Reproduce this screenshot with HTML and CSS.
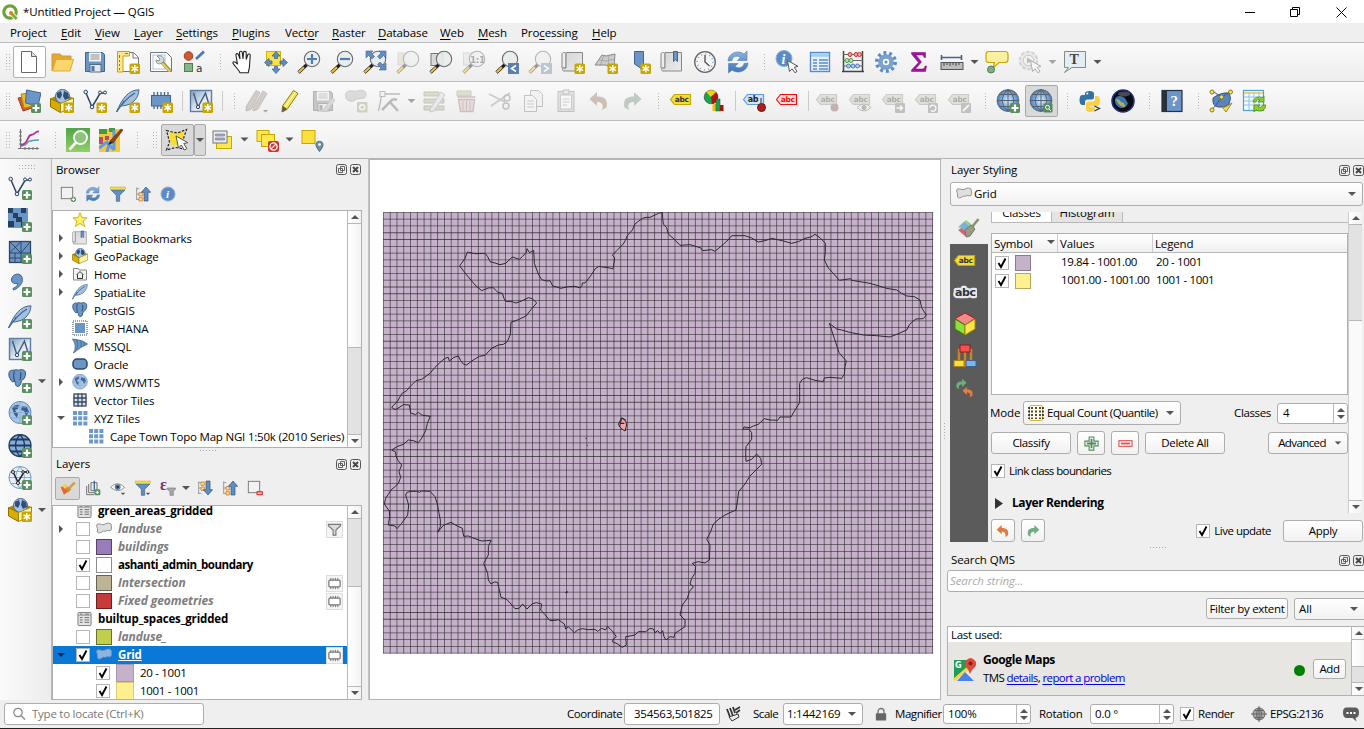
FILE: index.html
```html
<!DOCTYPE html>
<html lang="en">
<head>
<meta charset="utf-8">
<title>*Untitled Project — QGIS</title>
<link rel="stylesheet" href="styles.css">
</head>
<body>
<svg class="defs" width="0" height="0">
<defs>
<linearGradient id="gBlue" x1="0" y1="0" x2="0" y2="1"><stop offset="0" stop-color="#8fb3dc"/><stop offset="1" stop-color="#3f74b5"/></linearGradient>
<linearGradient id="gGrey" x1="0" y1="0" x2="1" y2="1"><stop offset="0" stop-color="#d4d4d4"/><stop offset="1" stop-color="#ececec"/></linearGradient>
<linearGradient id="gPale" x1="0" y1="0" x2="1" y2="1"><stop offset="0" stop-color="#7f9fc4"/><stop offset=".6" stop-color="#e9eff6"/><stop offset="1" stop-color="#a9bfd8"/></linearGradient>
<linearGradient id="gGreen" x1="0" y1="0" x2="0" y2="1"><stop offset="0" stop-color="#4fa544"/><stop offset="1" stop-color="#93cf6d"/></linearGradient>
<radialGradient id="gGlobe"><stop offset="0" stop-color="#e2f0ff"/><stop offset=".6" stop-color="#7db1e6"/><stop offset="1" stop-color="#4d76a8"/></radialGradient>

<symbol id="b-star" viewBox="0 0 24 24"><rect x="13.500" y="13.500" width="10.500" height="10.500" rx="1.500" fill="#c9a500"/><path d="M18.800 15v7.600M15.500 16.900l6.600 3.800M22.100 16.900l-6.600 3.800" stroke="#fff" stroke-width="1.500"/></symbol>
<symbol id="b-plus" viewBox="0 0 24 24"><rect x="14" y="14" width="10" height="10" rx="1.500" fill="#5a9060"/><path d="M19 15.500v7M15.500 19h7" stroke="#fff" stroke-width="2.200"/></symbol>
<symbol id="mag" viewBox="0 0 24 24"><path d="M10 14.500L1.500 22.500" stroke="#222" stroke-width="3.200"/><path d="M7 17.300L1.700 22.300" stroke="#f6c330" stroke-width="2"/><circle cx="15" cy="9" r="7.700" fill="#e9eced" fill-opacity=".9" stroke="#6a6a6a" stroke-width="1.100"/></symbol>
<symbol id="tag" viewBox="0 0 24 24"><path d="M1.500 10.500L5.500 5.500h16v10H5.500z" stroke-width="1.200"/></symbol>

<symbol id="qgis" viewBox="0 0 16 16"><circle cx="8" cy="8" r="6.200" fill="none" stroke="#6da33a" stroke-width="3.200"/><path d="M9 9l6 6.200" stroke="#fff" stroke-width="4.500"/><path d="M9.500 9.500l5.200 5.500" stroke="#7fb03f" stroke-width="3"/><circle cx="9" cy="9" r="2" fill="#ee7913"/></symbol>
<symbol id="new" viewBox="0 0 24 24"><path d="M4.500 1.500h10l5 5v16h-15z" fill="#fff" stroke="#666"/><path d="M14.500 1.500v5h5" fill="#ddd" stroke="#666"/></symbol>
<symbol id="open" viewBox="0 0 24 24"><path d="M2 21V4h8l2 2h9v3" fill="#e2a832" stroke="#d2982d"/><path d="M2.500 21L6 9.500h17.500L20 21z" fill="#fbd66c" stroke="#e0a93a"/></symbol>
<symbol id="save" viewBox="0 0 24 24"><path d="M2.500 2.500h17l2 2v17h-19z" fill="#6b95c7" stroke="#41648f"/><rect x="6" y="2.500" width="12" height="9" fill="#f3f3f3"/><path d="M7.500 5h9M7.500 7h9M7.500 9h9" stroke="#777" stroke-width=".8"/><rect x="7" y="14.500" width="11" height="7.500" fill="#e8e8e8" stroke="#506c8f"/><rect x="8.500" y="16" width="3" height="5" fill="#4d75a5"/></symbol>
<symbol id="layout" viewBox="0 0 24 24"><path d="M2.500 2.500h15l5 5v14h-20z" fill="#fff" stroke="#777"/><path d="M17 3v5h5" fill="none" stroke="#777"/><path d="M1.500 1.500h12v4.500h-6.500v16H1.500z" fill="#fde68e" stroke="#c8a013"/><path d="M3.500 5v3M3.500 10v2M3.500 14v2M3.500 18v2M9 3.500h3" stroke="#a07e00"/><use href="#b-star"/></symbol>
<symbol id="report" viewBox="0 0 24 24"><path d="M1.500 2.500h16l5 5v14h-21z" fill="#fff" stroke="#777"/><rect x="4" y="5" width="12" height="14" fill="none" stroke="#a9c3ea"/><path d="M11 10l10 11" stroke="#a78b2a" stroke-width="3.600"/><path d="M12 12l9 9.500" stroke="#e5ca72" stroke-width="2"/><path d="M8 6l3 3-1 2-3-1c0 3 2 5 6 3l2-2c0-4-2-6-7-5z" fill="#d9dcdd" stroke="#777" stroke-width=".8"/></symbol>
<symbol id="stylem" viewBox="0 0 24 24"><circle cx="6.500" cy="6" r="4.300" fill="#cf5a32" stroke="#9c3d1d"/><path d="M14 9l8-7.500" stroke="#4d79b0" stroke-width="2.800"/><rect x="2.500" y="13.500" width="8" height="8" fill="#88b48b" stroke="#4f7d55"/><text x="14" y="21.500" class="svg-t" font-size="10.500" fill="#333">a</text></symbol>
<symbol id="pan" viewBox="0 0 24 24"><path d="M9 22.800c-1-3-5-6-7-9.500-.5-2 2-2.500 4.500 1L5 5.500c-.5-2.200 2-2.600 2.600-.5L9 9 8.500 2.700c0-2 2.600-2 2.800 0L12 9l.5-6.300c.2-1.800 2.700-1.700 2.700.2V9.500L16.700 5c.6-1.700 2.700-1.200 2.500.5L18.500 16c0 3-1 4-1.200 6.800z" fill="#fff" stroke="#222" stroke-width="1.100"/></symbol>
<symbol id="panto" viewBox="0 0 24 24"><rect x="2.500" y="1.500" width="14" height="14" fill="#f9e241" stroke="#d2b100"/><path d="M12 1.500L16 6h-2.500v2.500h-3V6H8zM12 23.500L16 19h-2.500v-2.500h-3V19H8zM.5 12.500L5 8.500V11h3v3H5v2.500zM23.500 12.500L19 8.500V11h-3v3h3v2.500z" fill="#5f8dc4" stroke="#3f6594" stroke-width=".8"/></symbol>
<symbol id="zin" viewBox="0 0 24 24"><use href="#mag"/><path d="M15 4v10M10 9h10" stroke="#4f7fb8" stroke-width="2.200"/></symbol>
<symbol id="zout" viewBox="0 0 24 24"><use href="#mag"/><path d="M10 9h10" stroke="#4f7fb8" stroke-width="2.200"/></symbol>
<symbol id="zfull" viewBox="0 0 24 24"><use href="#mag"/><path d="M3 1h7L8 3l3.500 3.500-2.500 2.500L5.500 5.500 3 8zM23 1v7l-2.500-2.500L17 9l-2.500-2.500L18 3l-2-2zM23 20h-7l2-2-3.500-3.500L17 12l3.500 3.500L23 13z" fill="#5f8dc4" stroke="#3f6594" stroke-width=".6"/></symbol>
<symbol id="zsel" viewBox="0 0 24 24"><rect x="2" y="3" width="12" height="12" fill="#d9d6b8" stroke="#bbb"/><use href="#mag"/></symbol>
<symbol id="zlay" viewBox="0 0 24 24"><rect x="2" y="3.500" width="12" height="12" fill="#d8d8d8" stroke="#777"/><use href="#mag"/></symbol>
<symbol id="z11" viewBox="0 0 24 24"><rect x="1.500" y="3" width="12" height="12" fill="#e0e0e0" stroke="#bbb"/><use href="#mag"/><text x="8" y="12.500" class="svg-t svg-b" font-size="9" fill="#555">1:1</text></symbol>
<symbol id="zlast" viewBox="0 0 24 24"><use href="#mag"/><rect x="13" y="13" width="11" height="11" fill="#587fae"/><path d="M21 15.500l-4.500 3 4.500 3" fill="none" stroke="#fff" stroke-width="1.600"/></symbol>
<symbol id="znext" viewBox="0 0 24 24"><use href="#mag"/><rect x="13" y="13" width="11" height="11" fill="#7c93ae"/><path d="M16 15.500l4.500 3-4.500 3" fill="none" stroke="#fff" stroke-width="1.600"/></symbol>
<symbol id="roll" viewBox="0 0 24 24"><path d="M1 4c0-2 4-2 4 0v14H1z" fill="#eee" stroke="#888"/><path d="M5 2.500h16.500v18.500H3c-2 0-2-3 0-3h2z" fill="url(#gGrey)" stroke="#888"/></symbol>
<symbol id="newmap" viewBox="0 0 24 24"><use href="#roll"/><use href="#b-star"/></symbol>
<symbol id="new3d" viewBox="0 0 24 24"><path d="M1 15L8 5l4 1 9-2-1 13-9-2z" fill="#ccc" stroke="#888"/><path d="M5 10l7 1 9-2M10 5l-4 11M15 5l-1 12" stroke="#999" fill="none" stroke-width=".7"/><use href="#b-star"/></symbol>
<symbol id="newbm" viewBox="0 0 24 24"><path d="M7.500 1.500h9v19L12 17l-4.500-3z" fill="#6b95c7" stroke="#3f6594"/><use href="#b-star"/></symbol>
<symbol id="bms" viewBox="0 0 24 24"><use href="#roll"/><path d="M13.500 1.500h4v10l-2-1.800-2 1.800z" fill="#6b95c7" stroke="#3f6594"/></symbol>
<symbol id="clock" viewBox="0 0 24 24"><circle cx="12" cy="12" r="10.300" fill="#f4f4f4" stroke="#666" stroke-width="1.300"/><circle cx="12" cy="12" r="7.800" fill="none" stroke="#78a0cf" stroke-width="1.500" stroke-dasharray="1 3.080"/><path d="M12 5v7l4.500 4" fill="none" stroke="#555" stroke-width="1.400"/></symbol>
<symbol id="refresh" viewBox="0 0 24 24"><path d="M2 11C2 4 11-1 18 4l3-3v9.500h-9.500l3-3C10 4.500 6 7 6 10.500zM22 13c0 7-9 12-16 7l-3.500 3V13.500h9.500l-3 3c4.500 3 8.500.5 9-3z" fill="url(#gBlue)" stroke="#4a7db9" stroke-width=".6"/></symbol>
<symbol id="cursor" viewBox="0 0 24 24"><path d="M12.500 10.500l2 11 2.500-2.700 3 4 2-1.500-2.800-4 3.800-1z" fill="#fff" stroke="#555"/></symbol>
<symbol id="info" viewBox="0 0 24 24"><circle cx="12" cy="12" r="10.500" fill="#5c8ac2" stroke="#8caed6" stroke-width="1.500"/><text x="9" y="18" class="svg-s" font-size="17" fill="#fff">i</text></symbol>
<symbol id="ident" viewBox="0 0 24 24"><circle cx="9" cy="8.500" r="8" fill="#5c8ac2" stroke="#8caed6"/><text x="6.500" y="13.500" class="svg-s" font-size="14" fill="#fff">i</text><use href="#cursor"/></symbol>
<symbol id="table" viewBox="0 0 24 24"><rect x="2.500" y="2.500" width="19" height="19" fill="#e6f0fb" stroke="#5c8ac2" stroke-width="1.400"/><path d="M3 5h18" stroke="#9fd0ef" stroke-width="3.500"/><path d="M5 10h4M11 10h9M5 13h4M11 13h9M5 16h4M11 16h9M5 19h4M11 19h9" stroke="#5c8ac2" stroke-width="1.300"/></symbol>
<symbol id="abacus" viewBox="0 0 24 24"><path d="M2.500 1v20M21.500 1v20M1 21.500h22" stroke="#444" stroke-width="1.500"/><path d="M2 4.500h20M2 10.500h20M2 16h20" stroke="#666"/><g stroke-width="1"><g fill="#f3a0a0" stroke="#b33"><circle cx="9" cy="4.500" r="2"/><circle cx="15" cy="4.500" r="2"/><circle cx="18.500" cy="4.500" r="2"/></g><g fill="#b9e8b0" stroke="#4a9a44"><circle cx="6" cy="10.500" r="2"/><circle cx="10" cy="10.500" r="2"/></g><g fill="#a8cdee" stroke="#4a7db9"><circle cx="7.500" cy="16" r="2"/><circle cx="12" cy="16" r="2"/><circle cx="16.500" cy="16" r="2"/></g></g></symbol>
<symbol id="gear" viewBox="0 0 24 24"><circle cx="12" cy="12" r="9" fill="none" stroke="#5c8ac2" stroke-width="4" stroke-dasharray="2.830 2.830"/><circle cx="12" cy="12" r="5.500" fill="#fff" stroke="#79a1d3" stroke-width="4.500"/><circle cx="12" cy="12" r="1.500" fill="#5c8ac2"/></symbol>
<symbol id="sigma" viewBox="0 0 24 24"><path d="M4.500 2.500h14v5h-1.500c-.3-2-1-2.500-3-2.500H9l5.500 7L8.500 19H15c2 0 2.500-.8 3-3h1.500l-1 5.500H4.500v-1.500l7-7.500-7-8.500z" fill="#a5119f" stroke="#7c0b78" stroke-width=".5"/></symbol>
<symbol id="measure" viewBox="0 0 24 24"><path d="M1.500 7.500h20M1.500 5v5M21.500 5v5" stroke="#41648f" stroke-width="1.600"/><rect x="1" y="12.500" width="22" height="7" fill="#bdbdbd" stroke="#555"/><path d="M4 13v3M7 13v2M10 13v3M13 13v2M16 13v3M19 13v2" stroke="#444"/></symbol>
<symbol id="tips" viewBox="0 0 24 24"><path d="M4 1.500h16q3 0 3 3v5q0 3-3 3h-6L8 18l1.500-5.500H4q-3 0-3-3v-5q0-3 3-3z" fill="#fbf0a0" stroke="#c9a500" stroke-width="1.200"/><circle cx="6" cy="19.500" r="3.500" fill="#7fae83" stroke="#4f7d55"/></symbol>
<symbol id="action" viewBox="0 0 24 24"><circle cx="10.500" cy="10.500" r="8.800" fill="#ddd" stroke="#aaa" stroke-width="2" stroke-dasharray="4 1.500"/><circle cx="10.500" cy="10.500" r="5.300" fill="#eee" stroke="#888"/><path d="M9 7.500l5 3-5 3z" fill="#777"/><use href="#cursor"/></symbol>
<symbol id="textann" viewBox="0 0 24 24"><path d="M1.500 1.500h21v16H9L1.500 22.500l4-5h-4z" fill="#e4edf1" stroke="#888"/><text x="6.500" y="14" class="svg-serif" font-size="14" fill="#444">T</text></symbol>

<symbol id="ds" viewBox="0 0 24 24"><path d="M1 9l10-2 4 12-9 3z" fill="#cf5a32" stroke="#a0401c"/><path d="M4 5l10-1 3 13-10 2z" fill="#e9b92f" stroke="#b08a10"/><path d="M9.500 1l14.500 3-3 13-12.500-3z" fill="#6b95c7" stroke="#41648f"/><use href="#b-plus"/></symbol>
<symbol id="boxg" viewBox="0 0 24 24"><path d="M.5 9.500L12 4l11.500 5-13 6z" fill="#b18d00"/><circle cx="12.500" cy="7.500" r="7" fill="#a9c3e2" stroke="#41648f"/><path d="M7 4l4-2 1 4-2 4-3-2zM14 2l4 2 1 5-4 2-2-4z" fill="#2f4f78"/><path d="M.5 9.500L10.500 14.500v9L.5 18z" fill="#d8ac00" stroke="#8b6f00"/><path d="M10.500 14.500l13-5.500v9l-13 5.500z" fill="#fbf4a6" stroke="#a38700"/></symbol>
<symbol id="newgpkg" viewBox="0 0 24 24"><use href="#boxg"/><use href="#b-star"/></symbol>
<symbol id="vv" viewBox="0 0 24 24"><path d="M3 4l6 14 8-13.500 5-.8" fill="none" stroke="#2f4866" stroke-width="1.500"/><g fill="#e6ebf0" stroke="#2f4866"><circle cx="2.700" cy="3" r="1.800"/><circle cx="9" cy="18" r="1.800"/><circle cx="17" cy="3.500" r="1.500"/><circle cx="22" cy="3.500" r="1.500"/></g></symbol>
<symbol id="newshp" viewBox="0 0 24 24"><use href="#vv"/><use href="#b-star"/></symbol>
<symbol id="feather" viewBox="0 0 24 24"><path d="M.5 23C6 10 12 1 23 .8c-.5 4-1 8-7 13-4 2.500-8 3-11 3.200" fill="#a3c0e0" stroke="#41648f"/><path d="M.5 23C7 13 12 8 19 4M8 12l-2 4" stroke="#41648f" fill="none" stroke-width="1.300"/></symbol>
<symbol id="newspl" viewBox="0 0 24 24"><use href="#feather"/><use href="#b-star"/></symbol>
<symbol id="chip" viewBox="0 0 24 24"><path d="M5 3v5M8.500 3v5M12 3v5M15.500 3v5M19 3v5M5 16v4M8.500 16v4M12 16v4" stroke="#41648f" stroke-width="1.300"/><rect x="2.500" y="6.500" width="19" height="10.500" fill="#6b95c7" stroke="#41648f"/></symbol>
<symbol id="newmem" viewBox="0 0 24 24"><use href="#chip"/><use href="#b-star"/></symbol>
<symbol id="virt" viewBox="0 0 24 24"><rect x="1.500" y="1.500" width="21" height="21" fill="url(#gPale)" stroke="#5f7da3" stroke-width="1.400"/><path d="M4.500 4l4.500 14L16.500 4l3 10" fill="none" stroke="#41597a" stroke-width="1.400"/><circle cx="9" cy="18" r="1.700" fill="#e6ebf0" stroke="#2f4866"/></symbol>
<symbol id="newvirt" viewBox="0 0 24 24"><use href="#virt"/><use href="#b-star"/></symbol>
<symbol id="pencil" viewBox="0 0 24 24"><path d="M4.500 17L15.500 1.500l4.500 3L9 20.500 4 23z" fill="#f4e556" stroke="#8b7a1a"/><path d="M5 17l4 3-5 3z" fill="#555"/><path d="M7 18L17.500 3" stroke="#fffbd0"/></symbol>
<symbol id="pencils" viewBox="0 0 24 24"><path d="M1.500 17L11 1.500l4 2L6 20.500 1 22zM8.500 18L18 2l4 2.500-9.500 16L8 22z" fill="#a89c98" stroke="#8b7f7b"/><path d="M18 21h5l-2.500 2.500z" fill="#444"/></symbol>
<symbol id="saveed" viewBox="0 0 24 24"><use href="#save"/><path d="M13 20L21 9l3 2-8 11-3 1z" fill="#bbb" stroke="#999"/></symbol>
<symbol id="addpoly" viewBox="0 0 24 24"><path d="M2 4c3-4 7-1 11-2 5-2 10 0 9 4-1 5-5 3-9 4-3 1-3 3-7 2C1 11 1 7 2 4z" fill="#bbb" stroke="#999"/><rect x="13" y="13" width="10.500" height="10.500" rx="1" fill="#aaa68e"/><circle cx="18.200" cy="18.200" r="2.500" fill="none" stroke="#fff" stroke-width="1.500"/></symbol>
<symbol id="vertex" viewBox="0 0 24 24"><path d="M1.500 22L5 5h18" fill="none" stroke="#777" stroke-width="1.300"/><rect x="3" y="2.500" width="5" height="5" fill="#eee" stroke="#777"/><path d="M12 12l9 10M20 11q-4-2-6 1L5 21" fill="none" stroke="#777" stroke-width="2.500"/></symbol>
<symbol id="modify" viewBox="0 0 24 24"><path d="M2 3h15v4H2zM2 10h20v4H2zM2 17h20v4H2z" fill="#bdbba4" stroke="#8f8d78"/><path d="M8 20L19 3l4 3-11 16-4 1z" fill="#ddd" stroke="#999"/></symbol>
<symbol id="trash" viewBox="0 0 24 24"><path d="M2 2h14v5H2z" fill="#c2bfa5" stroke="#999"/><path d="M3.500 10.500h16l-1.500 12H5.500zM2.500 8h18" fill="#d8c5c5" stroke="#a37f7f" stroke-width="1.400"/><path d="M8 12v9M11.500 12v9M15 12v9" stroke="#a37f7f"/></symbol>
<symbol id="cut" viewBox="0 0 24 24"><path d="M1 5l16 8M3 17L22 4" stroke="#999" stroke-width="1.800"/><circle cx="19" cy="9" r="3" fill="none" stroke="#888" stroke-width="1.500"/><circle cx="18" cy="17" r="3" fill="none" stroke="#888" stroke-width="1.500"/></symbol>
<symbol id="copy" viewBox="0 0 24 24"><path d="M9.500 1.500h8l4 4v12h-12z" fill="#eee" stroke="#888"/><path d="M3.500 6.500h8l4 4v12h-12z" fill="#f7f7f7" stroke="#888"/><path d="M6 12h7M6 15h7M6 18h7" stroke="#999"/></symbol>
<symbol id="paste" viewBox="0 0 24 24"><rect x="4" y="2.500" width="16" height="20" fill="#ccc" stroke="#888"/><rect x="6.500" y="6" width="11" height="14" fill="#fff" stroke="#999"/><path d="M9 1h6v4H9z" fill="#ddd" stroke="#888"/><path d="M8.500 10h7M8.500 13h7M8.500 16h5" stroke="#999"/></symbol>
<symbol id="undo" viewBox="0 0 24 24"><path d="M2.500 10L10 3v4.500c8 0 11 3 9.500 11l-4.500 2.500c2-5 0-8-5-8V17z"/></symbol>
<symbol id="redo" viewBox="0 0 24 24"><path d="M21.500 10L14 3v4.500C6 7.500 3 10.500 4.500 18.500L9 21c-2-5 0-8 5-8V17z"/></symbol>
<symbol id="lab" viewBox="0 0 24 24"><use href="#tag" fill="#f2dc3c" stroke="#c9a500"/><text x="5.800" y="13" class="svg-t svg-b" font-size="7.500" fill="#333">abc</text></symbol>
<symbol id="diag" viewBox="0 0 24 24"><circle cx="9" cy="8" r="6.800" fill="#14a651" stroke="#333" stroke-width=".6"/><path d="M9 8L4.200 3A7 7 0 0 1 14 3.300z" fill="#f2d10c"/><path d="M9 8l5-4.800A7 7 0 0 1 10 15z" fill="#b01515"/><rect x="10.500" y="15" width="3.500" height="7" fill="#f7b90b"/><rect x="14" y="10" width="4" height="12" fill="#14a651" stroke="#333" stroke-width=".5"/><rect x="18" y="16" width="3.500" height="6" fill="#a11"/></symbol>
<symbol id="labpin" viewBox="0 0 24 24"><use href="#tag" fill="#cfe5fb" stroke="#5c9ae0"/><text x="5.800" y="13" class="svg-t svg-b" font-size="8" fill="#222">ab</text><path d="M19 9v7" stroke="#888" stroke-width="2"/><circle cx="19.500" cy="18.500" r="4" fill="#a52222" stroke="#7c1010"/></symbol>
<symbol id="labred" viewBox="0 0 24 24"><use href="#tag" fill="#fbdada" stroke="#ee1111"/><text x="5.800" y="13" class="svg-t svg-b" font-size="7.500" fill="#e11">abc</text></symbol>
<symbol id="labg" viewBox="0 0 24 24"><use href="#tag" fill="#c9c8bc" stroke="#9a998c"/><text x="5.800" y="13" class="svg-t svg-b" font-size="7.500" fill="#555">abc</text></symbol>
<symbol id="lg1" viewBox="0 0 24 24"><use href="#labg"/><circle cx="19.500" cy="18.500" r="4" fill="#8c6565"/></symbol>
<symbol id="lg2" viewBox="0 0 24 24"><use href="#labg"/><path d="M9 18.500q7-7 14 0-7 7-14 0z" fill="#eee" stroke="#777"/><circle cx="16" cy="18.500" r="2.500" fill="#777"/></symbol>
<symbol id="lg3" viewBox="0 0 24 24"><use href="#labg"/><rect x="14" y="14" width="10" height="10" rx="1" fill="#888"/><path d="M15.500 19h6M19 16.500l2.500 2.500-2.500 2.500" fill="none" stroke="#fff" stroke-width="1.500"/></symbol>
<symbol id="lg4" viewBox="0 0 24 24"><use href="#labg"/><rect x="14" y="14" width="10" height="10" rx="1" fill="#888"/><path d="M17 21.500a3 3 0 1 0-1-3" fill="none" stroke="#fff" stroke-width="1.500"/></symbol>
<symbol id="lg5" viewBox="0 0 24 24"><use href="#labg"/><rect x="14" y="14" width="10" height="10" rx="1" fill="#888"/><path d="M16 22l6-6" stroke="#fff" stroke-width="1.800"/></symbol>
<symbol id="globe" viewBox="0 0 24 24"><circle cx="12" cy="11.500" r="11" fill="url(#gGlobe)" stroke="#456" stroke-width=".6"/><path d="M1 11.500h22M3 5.500h18M3 17.500h18M12 .5v22M12 .5q-12 11 0 22M12 .5q12 11 0 22" fill="none" stroke="#59626c" stroke-width="1"/></symbol>
<symbol id="globep" viewBox="0 0 24 24"><use href="#globe"/><use href="#b-plus"/></symbol>
<symbol id="globes" viewBox="0 0 24 24"><use href="#globe"/><rect x="14.500" y="14.500" width="9" height="9" rx="1" fill="#4f8a58"/><circle cx="18.500" cy="18.300" r="2" fill="none" stroke="#fff"/><path d="M20 20l2 2" stroke="#fff"/></symbol>
<symbol id="python" viewBox="0 0 24 24"><path d="M7 7h6V6H4.500Q1.500 6 1.500 11q0 5 3 5H7v-3q0-2.500 2.500-2.500H14q2 0 2-2V4.500Q16 2 11.500 2T7 4.500z" fill="#3571a3"/><path d="M17 7h2q3 0 3 5t-3 5h-7v1h5v2q0 3-4.500 3T8 20v-5q0-2.500 2.500-2.500H15q2 0 2-2.500z" fill="#fbd140"/><circle cx="9.300" cy="4.500" r="1" fill="#fff"/><path d="M16.500 17l5 2.500-5 2.500" fill="none" stroke="#333" stroke-width="1.200"/></symbol>
<symbol id="earth" viewBox="0 0 24 24"><circle cx="12" cy="12" r="11" fill="#0b0b14" stroke="#1f2f77" stroke-width="1.500"/><path d="M4 10c1-3 5-4 8-2 3 1 3 4 5 6-1 4-4 5-7 5-4-1-7-5-6-9z" fill="#3b77ad"/><path d="M5 10c2 0 4 1 5 3 3 0 4 3 4 5-3 0-7-2-9-8z" fill="#b8ac62"/><ellipse cx="13" cy="5" rx="6" ry="2.500" fill="#777" opacity=".6"/></symbol>
<symbol id="book" viewBox="0 0 24 24"><rect x="2" y="1.500" width="20" height="21" fill="#6b95c7" stroke="#222f44" stroke-width="1.200"/><rect x="2" y="1.500" width="5" height="21" fill="#27303c"/><text x="10.500" y="17" class="svg-serif" font-size="15" fill="#fff">?</text></symbol>
<symbol id="topo" viewBox="0 0 24 24"><path d="M4 9q8-6 16-5 3 5 0 11-5 4-11 3-6-1-5-9z" fill="#5c86bb" stroke="#3a5a85"/><path d="M3 2l10 6 8-5M3 21L13 8" fill="none" stroke="#3a5a85"/><g fill="#f9e555" stroke="#8b7a1a"><circle cx="3" cy="3" r="2"/><circle cx="21.500" cy="3" r="2"/><circle cx="12.500" cy="8" r="2"/><circle cx="3" cy="21" r="2"/></g><path d="M13 18l4 5 6-9-6 4z" fill="#fbe34e" stroke="#8b6a1a" stroke-width=".8"/></symbol>
<symbol id="tabref" viewBox="0 0 24 24"><rect x="1.500" y="1.500" width="20" height="20" fill="#f4faff" stroke="#4ca0d4" stroke-width="1.200"/><path d="M2 8h19M2 12h19M2 16h19M7 3v18M12 3v18M17 3v18" stroke="#8cc6e6"/><path d="M2 4h19" stroke="#e8c257" stroke-width="1.500"/><path d="M11 13c1-5 6-6 9-4l2-2v6h-6l2-2c-2-1-4 0-4 2zM24 16c-1 6-6 7-10 5l-2 2v-7h6l-2 2c2 1 4 0 5-2z" fill="#8ed024" stroke="#4f8a10" stroke-width=".8"/></symbol>

<symbol id="plot" viewBox="0 0 24 24"><path d="M3.500 1v20M1 20.500h21M2 4h3M2 8h3M2 12h3M2 16h3M8 19v3M12 19v3M16 19v3M20 19v3" stroke="#777" stroke-width="1.100"/><path d="M4 18c8-1 5-4 9-5s4-1 9-1" fill="none" stroke="#4aa5ae" stroke-width="1.400"/><path d="M4 17c8-1 6-10 10-10s4-4 8-3.500" fill="none" stroke="#b62a9b" stroke-width="1.800"/></symbol>
<symbol id="qms" viewBox="0 0 24 24"><rect width="24" height="24" fill="url(#gGreen)"/><circle cx="14.500" cy="9.500" r="6.500" fill="#8cc47c" stroke="#fff" stroke-width="1.800"/><path d="M10 14.500L3.500 21.500" stroke="#fff" stroke-width="2.600"/></symbol>
<symbol id="osm" viewBox="0 0 24 24"><rect width="21" height="23" y="1" fill="#f5c73c"/><path d="M0 1h8v5H0zM10 0h6v4h-6z" fill="#3c9d3e"/><path d="M15 2v20M0 20l8-6 7 8M8 24l2-8" stroke="#5c9be6" stroke-width="3" fill="none"/><path d="M0 9h4v7H0zM6 8h4v4H6z" fill="#b94b6a"/><path d="M11 13L22 1l2 1-10 13z" fill="#8a4715" stroke="#5a2a08" stroke-width=".6"/><path d="M9 17l2-4 3 2z" fill="#222"/></symbol>
<symbol id="select" viewBox="0 0 24 24"><path d="M5 4l7 1 6-2v14H6l-1-6z" fill="#f7dd2e"/><path d="M1.500 2.500l6 1.500 5 1 9-3.500-3 9-2 4 5 7-11-2-9 2.500 3-8z" fill="none" stroke="#222" stroke-width="1.200" stroke-dasharray="2.500 1.500"/><path d="M11 8l2.500 12 2.800-3 3 5 2.500-1.500-3-5 4-.8z" fill="#fff" stroke="#555"/></symbol>
<symbol id="selform" viewBox="0 0 24 24"><rect x="6.500" y="8.500" width="15" height="12" fill="#fbe94e" stroke="#c9a500"/><rect x="3" y="3" width="14" height="12" fill="#e6eef3" stroke="#777"/><path d="M5.500 6h9v2h-9zM5.500 10h9v2h-9z" fill="#aac" stroke="#777" stroke-width=".6"/></symbol>
<symbol id="desel" viewBox="0 0 24 24"><rect x="2" y="2.500" width="12" height="11" fill="#fbe94e" stroke="#c9a500"/><rect x="6.500" y="6.500" width="13" height="12" fill="#fbe94e" stroke="#c9a500"/><rect x="13" y="13" width="11" height="11" rx="2" fill="#d7302d"/><circle cx="18.500" cy="18.500" r="3.600" fill="none" stroke="#fff" stroke-width="1.300"/><path d="M16 21l5-5" stroke="#fff" stroke-width="1.300"/></symbol>
<symbol id="selloc" viewBox="0 0 24 24"><rect x="2" y="2.500" width="13" height="13" fill="#fbe03e" stroke="#c9a500"/><path d="M19.500 23.500q-4-5-3.500-7.500a3.600 3.600 0 0 1 7 0q.5 2.500-3.500 7.500z" fill="#6f91a6" stroke="#4d7084"/><circle cx="19.500" cy="16.500" r="1.300" fill="#fff"/></symbol>

<symbol id="l-vec" viewBox="0 0 24 24"><use href="#vv"/><use href="#b-plus"/></symbol>
<symbol id="l-ras" viewBox="0 0 24 24"><rect width="20" height="20" fill="#6b95c7"/><path d="M0 0h5v5H0zM13 0h5v5h-5zM5 5h5v5H5zM8 9h6v5H8zM0 13h6v6H0zM13 14h5v5h-5z" fill="#24405f"/><use href="#b-plus"/></symbol>
<symbol id="l-mesh" viewBox="0 0 24 24"><rect x="1.500" y="1.500" width="21" height="21" fill="#6b95c7" stroke="#2f4866" stroke-width="1.300"/><path d="M13 1v22M1 13h22M1.500 1.500L13 13M13 1.500L1.500 13M22 2l-9 11M7 13v10M1 18h12" stroke="#2f4866" fill="none"/><use href="#b-plus"/></symbol>
<symbol id="l-csv" viewBox="0 0 24 24"><path d="M4.500 3.500q4-4 8-1.500 4 4 0 10-3 4-7 5l-.5-1.500q5-2 5-5-4 1-6-1.500-1.500-3 .5-5.500z" fill="#6b95c7" stroke="#41648f"/><use href="#b-plus"/></symbol>
<symbol id="l-spl" viewBox="0 0 24 24"><use href="#feather"/><use href="#b-plus"/></symbol>
<symbol id="l-virt" viewBox="0 0 24 24"><use href="#virt"/><use href="#b-plus"/></symbol>
<symbol id="pg" viewBox="0 0 24 24"><path d="M1 7q0-6 6-5.500 4-1 6 0 7-2 9 2 1 5-2 9l-3 2q-1 8-5 7.500-3-.5-3-6.500-4 2-5-1-3-4-3-7.500z" fill="#6b95c7" stroke="#2f5078" stroke-width="1.200"/><path d="M8 3q-2 5 0 12M16 4q1 5-1 10" stroke="#24405f" fill="none" stroke-width="1.200"/></symbol>
<symbol id="l-pg" viewBox="0 0 24 24"><use href="#pg" width="19" height="19"/><use href="#b-plus"/></symbol>
<symbol id="wms" viewBox="0 0 24 24"><circle cx="12" cy="11.500" r="11" fill="#a9c6e6" stroke="#5f86b5"/><path d="M4 7q3-4 7-3l-1 4-3 1 3 4-1 4-3-4zM14 5l5 1 2 5-3 4-2-5-3-1z" fill="#3c608e"/><path d="M1 11.500h22M12 1v22M3 6h18M3 17h18" stroke="#86a9d1" stroke-width=".8"/></symbol>
<symbol id="l-wms" viewBox="0 0 24 24"><use href="#wms"/><use href="#b-plus"/></symbol>
<symbol id="l-wcs" viewBox="0 0 24 24"><circle cx="12" cy="11.500" r="11" fill="#86acd8" stroke="#24405f" stroke-width="1.300"/><path d="M1 11.500h22M3 5.500h18M3 17.500h18" stroke="#1f3c60" stroke-width="2.200"/><path d="M12 .5q-9 11 0 22M12 .5q9 11 0 22" fill="none" stroke="#1f3c60" stroke-width="1.300"/><use href="#b-plus"/></symbol>
<symbol id="l-wfs" viewBox="0 0 24 24"><circle cx="12" cy="11.500" r="11" fill="#e7f0fa" stroke="#6b95c7"/><path d="M1 11.500h22M3 5.500h18M3 17.500h18M12 .5q-9 11 0 22M12 .5q9 11 0 22" fill="none" stroke="#86a9d1"/><path d="M5 6l5 10 6-10h4" fill="none" stroke="#222" stroke-width="1.500"/><g fill="#fff" stroke="#222"><circle cx="5" cy="6" r="1.500"/><circle cx="10" cy="17" r="1.500"/><circle cx="15" cy="6" r="1.300"/><circle cx="19.500" cy="6" r="1.300"/></g><use href="#b-plus"/></symbol>

<symbol id="addlayer" viewBox="0 0 24 24"><rect x="2" y="2" width="17" height="17" fill="#f2f2f2" stroke="#777" stroke-width="1.400"/><circle cx="20" cy="20" r="4" fill="#5a9060"/><path d="M20 17.500v5M17.500 20h5" stroke="#fff" stroke-width="1.500"/></symbol>
<symbol id="funnel" viewBox="0 0 24 24"><path d="M1.500 6h21l-8 8v9h-5v-9z" fill="#5f8dc4" stroke="#41648f"/><rect x="1" y="1.500" width="22" height="4" fill="#f4de3b" stroke="#c9a500" stroke-width=".7"/></symbol>
<symbol id="collapse" viewBox="0 0 24 24"><path d="M2.500 2v19M2.500 4h4M2.500 12h4M2.500 20h4" stroke="#888" stroke-width="1.200"/><path d="M6 10h5v5H6zM6 17.500h5v5H6z" fill="#f7e3a0" stroke="#e07b1f" stroke-width="1.300"/><path d="M16.500 1.500l7 8h-4v13h-6v-13h-4z" fill="#5f8dc4" stroke="#2f5078"/></symbol>
<symbol id="expand" viewBox="0 0 24 24"><path d="M2.500 2v19M2.500 4h4M2.500 12h4M2.500 20h4" stroke="#888" stroke-width="1.200"/><path d="M6 3h5v5H6zM6 10.500h5v5H6z" fill="#f7e3a0" stroke="#e07b1f" stroke-width="1.300"/><path d="M16.500 22.500l7-8h-4v-13h-6v13h-4z" fill="#5f8dc4" stroke="#2f5078"/></symbol>
<symbol id="brush" viewBox="0 0 24 24"><path d="M1 11l8-4 6 8-9 7z" fill="#e9662e"/><path d="M3 9l4-3 5 4-4 4z" fill="#f3d24a"/><path d="M8 12l6-2 3 4-5 5z" fill="#c98c3a"/><path d="M13 13l9-9" stroke="#d79b3a" stroke-width="3.500"/></symbol>
<symbol id="addgroup" viewBox="0 0 24 24"><path d="M2.500 9v13h11M5.500 6v13h10M9 4h9v12H9z" fill="none" stroke="#666" stroke-width="1.400"/><path d="M14 1v15" stroke="#3f6594" stroke-width="2"/><rect x="14" y="14" width="9" height="9" rx="2" fill="#5a9060"/><path d="M18.500 16v5M16 18.500h5" stroke="#fff" stroke-width="1.500"/></symbol>
<symbol id="eye" viewBox="0 0 24 24"><path d="M1 11q10-11 21 0-10 10-21 0z" fill="#fff" stroke="#888" stroke-width="1.300"/><circle cx="11.500" cy="10.500" r="4.500" fill="#5f7fa5"/><circle cx="11.500" cy="10.500" r="2" fill="#234"/><path d="M16 19h7l-3.500 3.500z" fill="#555"/></symbol>
<symbol id="funneld" viewBox="0 0 24 24"><use href="#funnel"/><path d="M16 19h7l-3.500 3.500z" fill="#555"/></symbol>
<symbol id="eps" viewBox="0 0 24 24"><text x="0" y="15" class="svg-serif" font-size="24" fill="#77327b">ε</text><path d="M11 12h12v2l-3 3v6h-5v-6l-4-3z" fill="#aaa" stroke="#777"/></symbol>
<symbol id="rml" viewBox="0 0 24 24"><rect x="2" y="2" width="17" height="17" fill="#f2f2f2" stroke="#777" stroke-width="1.400"/><rect x="14" y="16.500" width="10" height="6.500" rx="1.500" fill="#e04040"/><path d="M16 19.700h6" stroke="#fff" stroke-width="1.600"/></symbol>

<symbol id="star" viewBox="0 0 16 16"><path d="M8 .7l2 5h5.200L11 9l1.700 5.600L8 11.400l-4.700 3.200L5 9 .8 5.700H6z" fill="#fdf06a" stroke="#d5b516"/></symbol>
<symbol id="home" viewBox="0 0 16 16"><path d="M1.500 2.500h5l1 1.500h7v10h-13z" fill="#f2f2f2" stroke="#888"/><path d="M4.500 9L8 5.500 11.500 9M5.500 8.500v4h5v-4" fill="none" stroke="#333"/></symbol>
<symbol id="hana" viewBox="0 0 16 16"><rect x="3" y="3" width="10" height="10" fill="#6b95c7"/><rect x="1" y="1" width="14" height="14" fill="none" stroke="#2f4866" stroke-dasharray="1 1"/></symbol>
<symbol id="mssql" viewBox="0 0 16 16"><path d="M.5 1q5 .5 10 2l5 3q-7 3-14 9 4-7-1-14z" fill="#6b95c7" stroke="#41648f" stroke-width=".8"/><path d="M4.500 1.500q3 5 0 10M8.500 2.500q2 3.500 0 7M12 4q1 2 0 4" fill="none" stroke="#41648f" stroke-width=".8"/></symbol>
<symbol id="oracle" viewBox="0 0 16 16"><rect x="1" y="3" width="14" height="10" rx="4" fill="#6b95c7" stroke="#2f4866" stroke-width="1.500"/></symbol>
<symbol id="vtiles" viewBox="0 0 16 16"><rect x="2" y="2" width="12" height="12" fill="#dbe4ee" stroke="#35495f" stroke-width="1.300"/><path d="M6 1.500v13M10 1.500v13M1.500 6h13M1.500 10h13" stroke="#35495f" stroke-width="1.300"/></symbol>
<symbol id="xyz" viewBox="0 0 16 16"><path d="M1 1h4v4H1zM6.200 1h4v4h-4zM11.400 1h4v4h-4zM1 6.200h4v4H1zM6.200 6.200h4v4h-4zM11.400 6.200h4v4h-4zM1 11.400h4v4H1zM6.200 11.400h4v4h-4zM11.400 11.400h4v4h-4z" fill="#6b9acb"/></symbol>
<symbol id="tbl" viewBox="0 0 16 16"><rect x="1" y="1" width="14" height="14" rx="1" fill="#e5e5e5" stroke="#777"/><path d="M1 4h14" stroke="#999" stroke-width="1"/><path d="M3 6.500h3M8 6.500h5M3 9h3M8 9h5M3 11.500h3M8 11.500h5M3 2.800h3M8 2.800h5" stroke="#666"/></symbol>
<symbol id="poly" viewBox="0 0 16 16"><path d="M.6 5Q.500 2.500 3 2.800q2.500 1 5 .8 2-1.500 4.500-1.600 3 .2 2.900 2.500V8q0 2-2.400 1.800-2-1-3.500.5-2.500-1-4 1Q1 13 1.500 10 1.800 7 .6 5z" stroke-width=".9"/></symbol>
<symbol id="mem" viewBox="0 0 16 16"><path d="M4 2v3M6.500 2v3M9 2v3M11.500 2v3M4 11v3M6.500 11v3M9 11v3M11.500 11v3" stroke="#777"/><rect x="2" y="4.500" width="12" height="7" rx="1" fill="#fff" stroke="#777" stroke-width="1.300"/></symbol>
<symbol id="filt" viewBox="0 0 16 16"><path d="M1.500 2.500h13v1.500l-5 4.500V14h-3V8.500l-5-4.500z" fill="#ddd" stroke="#777" stroke-width="1.200"/></symbol>
<symbol id="float" viewBox="0 0 11 11"><rect x=".5" y=".5" width="10" height="10" rx="2" fill="none" stroke="#555"/><path d="M4.500 2.500h4v4h-4zM2.500 4.500h4v4h-4z" fill="#efefef" stroke="#555" stroke-width=".9"/></symbol>
<symbol id="close" viewBox="0 0 11 11"><rect x=".5" y=".5" width="10" height="10" rx="2" fill="none" stroke="#555"/><path d="M3 3l5 5M8 3L3 8" stroke="#444" stroke-width="1.900"/></symbol>
<symbol id="tick" viewBox="0 0 14 14"><path d="M3.500 7l2.500 4 4.500-8.500" fill="none" stroke="#000" stroke-width="1.900"/></symbol>

<symbol id="s-brush" viewBox="0 0 24 24"><path d="M2 11l8-7 9 7-8 6z" fill="#97d27f"/><path d="M4 10l4-4 5 4-4 4z" fill="#6fb1e8"/><path d="M2 14l4-2 5 5-2 3z" fill="#d85f7f"/><path d="M9 14l6-5 4 4-5 7-4 1z" fill="#9b9a87" stroke="#77766a"/><path d="M16 11l6.500-8" stroke="#8f8f77" stroke-width="2.600"/></symbol>
<symbol id="s-lab" viewBox="0 0 24 24"><use href="#lab" y="2"/></symbol>
<symbol id="s-mask" viewBox="0 0 24 24"><text x="2" y="15.500" class="svg-t svg-b" font-size="11" fill="#333" stroke="#e4e9f5" stroke-width="4.500" stroke-linejoin="round" paint-order="stroke">abc</text></symbol>
<symbol id="s-cube" viewBox="0 0 24 24"><path d="M12 1l10 5.500L12 13 2 6.500z" fill="#f28a8a" stroke="#b11"/><path d="M2 7l10 6v10L2 17z" fill="#8be03a" stroke="#3d7a10"/><path d="M22 7l-10 6v10l10-6z" fill="#fde44e" stroke="#a98a00"/></symbol>
<symbol id="s-dia" viewBox="0 0 24 24"><path d="M6 17V6h12v11M12 8v15" fill="none" stroke="#c88428" stroke-width="2.500"/><rect x="7" y="1" width="10" height="7" fill="#f05252" stroke="#a11"/><rect x="1" y="16.500" width="10" height="6" fill="#f7dc4e" stroke="#a98a00"/><rect x="13" y="16.500" width="10" height="6" fill="#7fb3ea" stroke="#41648f"/></symbol>
<symbol id="s-hist" viewBox="0 0 24 24"><use href="#redo" width="14" height="14" x="1" y="1" fill="#6fae7f"/><use href="#undo" width="14" height="14" x="8" y="9" fill="#e08040"/></symbol>
<symbol id="quant" viewBox="0 0 16 16"><rect x="1.500" y=".5" width="13" height="15" rx="1.500" fill="#fffbe0" stroke="#cdbb3b"/><path d="M1 2v12M4 2v12M8 2v12M12 2v12M15 2v12" stroke="#222" stroke-width="1.600" stroke-dasharray="2 1.500"/></symbol>
<symbol id="gmap" viewBox="0 0 24 24"><path d="M2 3h16v19H2z" fill="#1f9d58"/><path d="M1 24L22 8v14z" fill="#e8e8e8"/><path d="M1 22L17 8l4 1L3 24z" fill="#fbd34a"/><path d="M5 24l8-9 9 9z" fill="#4a83ec"/><text x="3" y="10.500" class="svg-t svg-b" font-size="8" fill="#fff">G</text><path d="M18 17q-1-4-4-7a5.500 5.500 0 1 1 9 0q-4 3-5 7z" fill="#dd4a3c"/><circle cx="18.500" cy="6.500" r="2" fill="#7c2018"/></symbol>
<symbol id="search" viewBox="0 0 14 14"><circle cx="6" cy="5.500" r="4.200" fill="none" stroke="#888" stroke-width="1.200"/><path d="M9 8.500l4 4" stroke="#888" stroke-width="1.500"/></symbol>
<symbol id="extents" viewBox="0 0 16 16"><path d="M2 3l3 8M5 2l3 8M8 1l2 6" stroke="#333" stroke-width="1.800"/><path d="M4 11l9-3 1 3-7 4z" fill="#eee" stroke="#333"/><path d="M10 4l5-3M11 7l4-3" stroke="#333" stroke-width="1.600"/></symbol>
<symbol id="lock" viewBox="0 0 14 16"><path d="M3.500 7V4.500a3.500 3.500 0 0 1 7 0V7" fill="none" stroke="#777" stroke-width="1.600"/><rect x="1" y="6.500" width="12" height="8.500" rx="1" fill="#666"/></symbol>
<symbol id="crs" viewBox="0 0 16 16"><circle cx="8" cy="8" r="6" fill="#aaa" stroke="#666"/><path d="M0 8h16M3 4.500h10M3 11.500h10M8 0v16M8 2q-5 6 0 12M8 2q5 6 0 12" fill="none" stroke="#666"/></symbol>
<symbol id="bubble" viewBox="0 0 16 16"><path d="M3.500 1.500h9Q16 2 16 6.500T12.500 12l1 3.500L9.500 12h-6Q0 11.500 0 6.500t3.500-5z" fill="#5b5b5b"/><path d="M3.500 7h2M7 7h2M10.500 7h2" stroke="#fff" stroke-width="2"/></symbol>
</defs>
</svg>

<div class="app">
<header class="titlebar">
  <svg class="ic16"><use href="#qgis"/></svg><span class="title">*Untitled Project — QGIS</span>
  <svg class="winbtns" viewBox="0 0 110 20"><path d="M5 10.500h10M96.500 5.500l10 10M106.500 5.500l-10 10" stroke="#000" fill="none"/><path d="M50.500 7.500h7v7h-7zM52.500 7v-1.500h7v7H58" stroke="#000" fill="none"/></svg>
</header>
<nav class="menubar">
  <span>Pro<u>j</u>ect</span><span><u>E</u>dit</span><span><u>V</u>iew</span><span><u>L</u>ayer</span><span><u>S</u>ettings</span><span><u>P</u>lugins</span><span>Vect<u>o</u>r</span><span><u>R</u>aster</span><span><u>D</u>atabase</span><span><u>W</u>eb</span><span><u>M</u>esh</span><span>Pro<u>c</u>essing</span><span><u>H</u>elp</span>
</nav>

<div class="toolbar">
  <i class="grip first"></i>
  <b class="tb framed"><svg><use href="#new"/></svg></b><b class="tb"><svg><use href="#open"/></svg></b><b class="tb"><svg><use href="#save"/></svg></b><b class="tb"><svg><use href="#layout"/></svg></b><b class="tb"><svg><use href="#report"/></svg></b><b class="tb"><svg><use href="#stylem"/></svg></b>
  <i class="grip"></i>
  <b class="tb"><svg><use href="#pan"/></svg></b><b class="tb"><svg><use href="#panto"/></svg></b><b class="tb"><svg><use href="#zin"/></svg></b><b class="tb"><svg><use href="#zout"/></svg></b><b class="tb"><svg><use href="#zfull"/></svg></b><b class="tb off"><svg><use href="#zsel"/></svg></b><b class="tb"><svg><use href="#zlay"/></svg></b><b class="tb off"><svg><use href="#z11"/></svg></b><b class="tb"><svg><use href="#zlast"/></svg></b><b class="tb off"><svg><use href="#znext"/></svg></b><b class="tb"><svg><use href="#newmap"/></svg></b><b class="tb"><svg><use href="#new3d"/></svg></b><b class="tb"><svg><use href="#newbm"/></svg></b><b class="tb"><svg><use href="#bms"/></svg></b><b class="tb"><svg><use href="#clock"/></svg></b><b class="tb"><svg><use href="#refresh"/></svg></b>
  <i class="grip"></i>
  <b class="tb"><svg><use href="#ident"/></svg></b><b class="tb"><svg><use href="#table"/></svg></b><b class="tb"><svg><use href="#abacus"/></svg></b><b class="tb"><svg><use href="#gear"/></svg></b><b class="tb"><svg><use href="#sigma"/></svg></b><b class="tb"><svg><use href="#measure"/></svg></b><i class="arr"></i><b class="tb"><svg><use href="#tips"/></svg></b><b class="tb off"><svg><use href="#action"/></svg></b><i class="arr off"></i><b class="tb"><svg><use href="#textann"/></svg></b><i class="arr"></i>
</div>

<div class="toolbar">
  <i class="grip first"></i>
  <b class="tb"><svg><use href="#ds"/></svg></b><b class="tb"><svg><use href="#newgpkg"/></svg></b><b class="tb"><svg><use href="#newshp"/></svg></b><b class="tb"><svg><use href="#newspl"/></svg></b><b class="tb"><svg><use href="#newmem"/></svg></b><i class="sep"></i><b class="tb"><svg><use href="#newvirt"/></svg></b><i class="sep"></i>
  <i class="grip"></i>
  <b class="tb off"><svg><use href="#pencils"/></svg></b><b class="tb"><svg><use href="#pencil"/></svg></b><b class="tb off grey"><svg><use href="#saveed"/></svg></b><b class="tb off"><svg><use href="#addpoly"/></svg></b><b class="tb off"><svg><use href="#vertex"/></svg></b><i class="arr off"></i><b class="tb off"><svg><use href="#modify"/></svg></b><b class="tb off"><svg><use href="#trash"/></svg></b><b class="tb off"><svg><use href="#cut"/></svg></b><b class="tb off"><svg><use href="#copy"/></svg></b><b class="tb off"><svg><use href="#paste"/></svg></b><b class="tb off"><svg class="undo-off"><use href="#undo"/></svg></b><b class="tb off"><svg class="redo-off"><use href="#redo"/></svg></b>
  <i class="grip"></i>
  <b class="tb"><svg><use href="#lab"/></svg></b><b class="tb"><svg><use href="#diag"/></svg></b><i class="sep"></i><b class="tb"><svg><use href="#labpin"/></svg></b><b class="tb"><svg><use href="#labred"/></svg></b><i class="sep"></i><b class="tb off"><svg><use href="#lg1"/></svg></b><b class="tb off"><svg><use href="#lg2"/></svg></b><b class="tb off"><svg><use href="#lg3"/></svg></b><b class="tb off"><svg><use href="#lg4"/></svg></b><b class="tb off"><svg><use href="#lg5"/></svg></b>
  <i class="grip"></i>
  <b class="tb"><svg><use href="#globep"/></svg></b><b class="tb checked"><svg><use href="#globes"/></svg></b>
  <i class="grip"></i>
  <b class="tb"><svg><use href="#python"/></svg></b><b class="tb"><svg><use href="#earth"/></svg></b>
  <i class="grip"></i>
  <b class="tb"><svg><use href="#book"/></svg></b>
  <i class="grip"></i>
  <b class="tb"><svg><use href="#topo"/></svg></b><b class="tb"><svg><use href="#tabref"/></svg></b>
</div>

<div class="toolbar third">
  <i class="grip first"></i>
  <b class="tb"><svg><use href="#plot"/></svg></b>
  <i class="grip"></i>
  <b class="tb"><svg><use href="#qms"/></svg></b><b class="tb"><svg><use href="#osm"/></svg></b>
  <i class="grip"></i><i class="grip wide"></i>
  <b class="tb checked"><svg><use href="#select"/></svg></b><i class="arr checked"></i><b class="tb"><svg><use href="#selform"/></svg></b><i class="arr"></i><b class="tb"><svg><use href="#desel"/></svg></b><i class="arr"></i><b class="tb"><svg><use href="#selloc"/></svg></b>
</div>

<main class="main">
<aside class="leftbar">
  <i class="hgrip"></i>
  <b class="lb"><svg><use href="#l-vec"/></svg></b><b class="lb"><svg><use href="#l-ras"/></svg></b><b class="lb"><svg><use href="#l-mesh"/></svg></b><b class="lb"><svg><use href="#l-csv"/></svg></b><b class="lb"><svg><use href="#l-spl"/></svg></b><b class="lb"><svg><use href="#l-virt"/></svg></b><b class="lb"><svg><use href="#l-pg"/></svg><i class="arr"></i></b><b class="lb"><svg><use href="#l-wms"/></svg></b><b class="lb"><svg><use href="#l-wcs"/></svg></b><b class="lb"><svg><use href="#l-wfs"/></svg></b><b class="lb"><svg><use href="#newgpkg"/></svg><i class="arr"></i></b>
</aside>

<section class="docks">
  <div class="dock-title"><span>Browser</span><svg class="d"><use href="#float"/></svg><svg class="d"><use href="#close"/></svg></div>
  <div class="dock-tools browser-tools">
    <b class="dt"><svg><use href="#addlayer"/></svg></b><b class="dt"><svg><use href="#refresh"/></svg></b><b class="dt"><svg><use href="#funnel"/></svg></b><b class="dt"><svg><use href="#collapse"/></svg></b><b class="dt"><svg><use href="#info"/></svg></b>
  </div>
  <div class="list browser-list">
    <div class="rows">
      <div class="row"><i class="tw"></i><svg><use href="#star"/></svg><span>Favorites</span></div>
      <div class="row"><i class="tw r"></i><svg><use href="#bms"/></svg><span>Spatial Bookmarks</span></div>
      <div class="row"><i class="tw r"></i><svg><use href="#boxg"/></svg><span>GeoPackage</span></div>
      <div class="row"><i class="tw r"></i><svg><use href="#home"/></svg><span>Home</span></div>
      <div class="row"><i class="tw r"></i><svg><use href="#feather"/></svg><span>SpatiaLite</span></div>
      <div class="row"><i class="tw"></i><svg><use href="#pg"/></svg><span>PostGIS</span></div>
      <div class="row"><i class="tw"></i><svg><use href="#hana"/></svg><span>SAP HANA</span></div>
      <div class="row"><i class="tw"></i><svg><use href="#mssql"/></svg><span>MSSQL</span></div>
      <div class="row"><i class="tw"></i><svg><use href="#oracle"/></svg><span>Oracle</span></div>
      <div class="row wide"><i class="tw r"></i><svg><use href="#wms"/></svg><span>WMS/WMTS</span></div>
      <div class="row"><i class="tw"></i><svg><use href="#vtiles"/></svg><span>Vector Tiles</span></div>
      <div class="row"><i class="tw o"></i><svg><use href="#xyz"/></svg><span>XYZ Tiles</span></div>
      <div class="row child"><i class="tw"></i><svg><use href="#xyz"/></svg><span>Cape Town Topo Map NGI 1:50k (2010 Series)</span></div>
    </div>
    <div class="sbar"><i class="up"></i><i class="track"><i class="thumb t-browser"></i></i><i class="dn"></i></div>
  </div>
  <div class="split"><i class="hgrip"></i></div>
  <div class="dock-title layers-title"><span>Layers</span><svg class="d"><use href="#float"/></svg><svg class="d"><use href="#close"/></svg></div>
  <div class="dock-tools layer-tools">
    <b class="dt checked"><svg><use href="#brush"/></svg></b><b class="dt"><svg><use href="#addgroup"/></svg></b><b class="dt"><svg><use href="#eye"/></svg></b><b class="dt"><svg><use href="#funneld"/></svg></b><b class="dt"><svg><use href="#eps"/></svg></b><i class="arr"></i><b class="dt"><svg><use href="#expand"/></svg></b><b class="dt"><svg><use href="#collapse"/></svg></b><b class="dt"><svg><use href="#rml"/></svg></b>
  </div>
  <div class="list layer-list">
    <div class="rows">
      <div class="row tab"><svg><use href="#tbl"/></svg><span>green_areas_gridded</span></div>
      <div class="row dim"><i class="tw r"></i><i class="cb"></i><svg class="poly"><use href="#poly"/></svg><span>landuse</span><em><svg><use href="#filt"/></svg></em></div>
      <div class="row dim"><i class="tw"></i><i class="cb"></i><i class="sw purple"></i><span>buildings</span></div>
      <div class="row bold"><i class="tw"></i><i class="cb"><svg><use href="#tick"/></svg></i><i class="sw white"></i><span>ashanti_admin_boundary</span></div>
      <div class="row dim"><i class="tw"></i><i class="cb"></i><i class="sw tan"></i><span>Intersection</span><em><svg><use href="#mem"/></svg></em></div>
      <div class="row dim"><i class="tw"></i><i class="cb"></i><i class="sw red"></i><span>Fixed geometries</span><em><svg><use href="#mem"/></svg></em></div>
      <div class="row tab"><svg><use href="#tbl"/></svg><span>builtup_spaces_gridded</span></div>
      <div class="row dim"><i class="tw"></i><i class="cb"></i><i class="sw lime"></i><span>landuse_</span></div>
      <div class="row sel"><i class="tw o"></i><i class="cb"><svg><use href="#tick"/></svg></i><svg class="poly"><use href="#poly"/></svg><span>Grid</span><em><svg><use href="#mem"/></svg></em></div>
      <div class="row cls"><i class="cb"><svg><use href="#tick"/></svg></i><i class="sw lilac"></i><span>20 - 1001</span></div>
      <div class="row cls"><i class="cb"><svg><use href="#tick"/></svg></i><i class="sw yellow"></i><span>1001 - 1001</span></div>
    </div>
    <div class="sbar"><i class="up"></i><i class="track"><i class="thumb t-layers"></i></i><i class="dn"></i></div>
  </div>
</section>

<section class="canvas">
<svg class="map" viewBox="370 160 569 539">
  <rect x="383.300" y="212.300" width="549.700" height="441" fill="#c6b1ca"/>
  <path d="M383 432.800h550.300" stroke="#232323" stroke-opacity=".7" stroke-width="441.300" stroke-dasharray=".8 5.981" fill="none"/>
  <path d="M658.150 212v441.600" stroke="#232323" stroke-opacity=".7" stroke-width="549.900" stroke-dasharray=".8 5.981" fill="none"/>
  <g transform="translate(375 205) scale(.33333)" fill="none" stroke="#2b2730" stroke-width="3" stroke-linejoin="round">
  <path d="M862 22L850 25 840 30 825 37 813 37 803 40 790 49 780 57 772 75 757 92 751 106 745 117 725 137 712 151 719 158 718 168 714 192 705 189 690 187 672 184 660 192 650 208 640 222 630 234 622 234 621 242 615 249 600 244 580 245 557 250 545 246 533 243 525 227 515 228 500 224 490 207 478 175 476 136 464 143 456 131 454 142 443 154 433 163 412 156 392 175 375 179 360 174 345 170 338 155 330 145 300 146 277 141 270 160 254 183 275 210 300 240 320 257 340 249 355 248 368 262 382 265 387 280 392 289 412 290 422 294 440 288 460 278 472 281 485 294 468 314 453 333 430 344 408 352 406 388 397 410 385 418 370 420 350 430 330 451 313 454 290 468 275 480 265 477 257 467 250 453 237 457 223 468 220 457 210 460 200 468 180 487 165 505 140 523 123 527 105 545 95 557 80 566 68 588 50 607 60 614 72 608 85 599 103 600 107 624 122 629 130 622 140 630 166 634 157 655 152 677 140 700 130 713 115 707 100 705 85 718 68 724 50 735 62 741 63 753 68 765 80 780 72 800 77 817 70 835 60 845 50 853 40 868 32 880 28 897 43 918 44 935 40 960 60 963 66 971 80 955 98 930 101 900 92 870 96 862 108 859 125 859 133 862 140 858 165 859 180 875 187 897 192 925 196 945 196 965 188 982 205 961 228 952 243 961 262 970 266 994 280 993 300 1001 320 1008 348 1006 340 1025 340 1050 326 1075 338 1105 340 1125 348 1137 358 1131 368 1132 373 1155 378 1177 395 1183 408 1197 420 1211 432 1210 443 1197 456 1212 472 1196 485 1193 500 1197 497 1215 510 1229 525 1247 540 1246 550 1244 568 1257 572 1272 580 1265 598 1283 610 1274 622 1271 640 1274 660 1273 668 1279 680 1270 692 1275 697 1264 712 1278 724 1295 715 1302 712 1310 726 1316 742 1327 754 1320 752 1295 765 1293 780 1290 790 1280 812 1280 825 1270 835 1272 840 1283 848 1277 855 1285 863 1277 867 1295 873 1305 885 1295 897 1297 900 1285 915 1275 930 1265 930 1245 915 1230 922 1200 937 1180 943 1160 955 1145 945 1137 950 1120 960 1105 962 1085 952 1075 970 1070 990 1074 1003 1065 1005 1020 995 1003 1007 980 1015 957 1032 942 1050 930 1065 923 1083 915 1088 885 1091 860 1110 837 1125 813 1145 793 1160 778 1157 760 1145 747 1130 763 1113 769 1112 745 1113 725 1130 703 1130 683 1121 672 1105 673 1107 666 1125 668 1135 663 1150 658 1168 641 1185 645 1208 646 1215 636 1248 636 1260 615 1274 593 1274 560 1274 535 1282 523 1295 518 1320 526 1345 530 1348 519 1365 517 1400 520 1408 508 1410 485 1414 468 1392 443 1378 400 1363 355 1385 372 1400 375 1420 381 1465 390 1505 392 1545 396 1570 386 1595 375 1603 360 1610 352 1623 342 1645 341 1654 330 1640 308 1635 285 1618 275 1595 273 1580 265 1565 255 1535 250 1485 235 1430 226 1427 221 1393 226 1373 203 1360 189 1348 165 1351 140 1351 115 1335 98 1320 88 1308 96 1290 100 1270 110 1250 115 1225 108 1190 100 1170 107 1150 111 1130 99 1110 92 1070 92 1060 104 1045 118 1020 139 1010 134 982 137 978 129 945 119 915 121 898 103 880 87 875 68 865 57 863 40z"/>
  <path d="M740 638l12 10 3 12-5 18-12-8-8-12z" fill="#f2a3a3"/><path d="M740 640l-4 14-2 12M734 655h14M742 640l10 6" stroke-width="3.500"/>
  <path d="M632 699l3 2M636 721l2 1M749 675l4 1M571 1163l6-3-2 4" stroke-width="3.500"/>
  </g>
</svg>
</section>

<section class="right">
  <i class="vgrip"></i>
  <div class="dock-title"><span>Layer Styling</span><svg class="d"><use href="#float"/></svg><svg class="d"><use href="#close"/></svg></div>
  <div class="combo layer-combo"><svg class="poly"><use href="#poly"/></svg><span>Grid</span><i class="arr"></i></div>
  <div class="styling">
    <div class="modes">
      <b class="m on"><svg><use href="#s-brush"/></svg></b><b class="m"><svg><use href="#s-lab"/></svg></b><b class="m"><svg><use href="#s-mask"/></svg></b><b class="m"><svg><use href="#s-cube"/></svg></b><b class="m"><svg><use href="#s-dia"/></svg></b><b class="m"><svg><use href="#s-hist"/></svg></b>
    </div>
    <div class="stycol">
    <div class="scrollarea">
      <div class="content">
        <div class="tabs"><span class="tabx on">Classes</span><span class="tabx">Histogram</span></div>
        <div class="classes">
          <div class="thead"><span>Symbol<i class="arr"></i></span><span>Values</span><span>Legend</span></div>
          <div class="trow"><span><i class="cb"><svg><use href="#tick"/></svg></i><i class="sw lilac"></i></span><span>19.84 - 1001.00</span><span>20 - 1001</span></div>
          <div class="trow"><span><i class="cb"><svg><use href="#tick"/></svg></i><i class="sw yellow"></i></span><span>1001.00 - 1001.00</span><span>1001 - 1001</span></div>
        </div>
        <div class="moderow"><span class="lbl">Mode</span><div class="combo mode"><svg><use href="#quant"/></svg><span>Equal Count (Quantile)</span><i class="arr"></i></div><span class="push">Classes</span><div class="spin classes-n"><span>4</span><i class="ud"></i></div></div>
        <div class="btnrow"><span class="btn w80">Classify</span><span class="btn sq"><svg viewBox="0 0 16 16"><path d="M5.500 1h5v4.500H15v5h-4.500V15h-5v-4.500H1v-5h4.500z" fill="#fff" stroke="#4f8a58" stroke-width="1.200"/><path d="M8 3v10M3 8h10" stroke="#4f8a58" stroke-width="2"/></svg></span><span class="btn sq"><svg viewBox="0 0 16 16"><rect x="1" y="5" width="14" height="6" fill="#fff" stroke="#e05050" stroke-width="1.200"/><rect x="3" y="7" width="10" height="2" fill="#e05050"/></svg></span><span class="btn w80">Delete All</span><span class="btn w80 adv">Advanced<i class="arr"></i></span></div>
        <div class="chk link"><i class="cb"><svg><use href="#tick"/></svg></i><span>Link class boundaries</span></div>
        <div class="rend"><i class="tri"></i><span>Layer Rendering</span></div>
      </div>
      <div class="sbar"><i class="up"></i><i class="track"><i class="thumb t-style"></i></i><i class="dn"></i></div>
    </div>
    <div class="applyrow"><span class="btn ur"><svg class="undo"><use href="#undo"/></svg></span><span class="btn ur"><svg class="redo"><use href="#redo"/></svg></span><span class="chk live"><i class="cb"><svg><use href="#tick"/></svg></i><span>Live update</span></span><span class="btn w80">Apply</span></div>
    </div>
  </div>
  <div class="rsplit"><i class="hgrip"></i></div>
  <div class="dock-title qms-title"><span>Search QMS</span><svg class="d"><use href="#float"/></svg><svg class="d"><use href="#close"/></svg></div>
  <div class="field qsearch">Search string...</div>
  <div class="qfilter"><span class="btn ext">Filter by extent</span><div class="combo all"><span>All</span><i class="arr"></i></div></div>
  <div class="qlist">
    <div class="qrows"><div class="last">Last used:</div>
      <div class="svc"><svg class="ic24"><use href="#gmap"/></svg><div class="svct"><strong>Google Maps</strong><span>TMS <a>details</a>, <a>report a problem</a></span></div><i class="dot"></i><span class="btn add">Add</span></div>
    </div>
    <div class="sbar"><i class="up"></i><i class="track"><i class="thumb t-qms"></i></i><i class="dn"></i></div>
  </div>
</section>
</main>

<footer class="status">
  <div class="field locate"><svg><use href="#search"/></svg><span>Type to locate (Ctrl+K)</span></div>
  <span class="coord-label">Coordinate</span><div class="field coord">354563,501825</div><svg class="ic16 mid"><use href="#extents"/></svg>
  <span class="scale-label">Scale</span><div class="field scale"><span>1:1442169</span><i class="arr"></i></div><svg class="lock"><use href="#lock"/></svg>
  <span class="mag-label">Magnifier</span><div class="spin magn"><span>100%</span><i class="ud"></i></div>
  <span class="rot-label">Rotation</span><div class="spin rotn"><span>0.0 °</span><i class="ud"></i></div>
  <i class="cb"><svg><use href="#tick"/></svg></i><span class="render">Render</span><svg class="ic16"><use href="#crs"/></svg><span class="epsg">EPSG:2136</span><svg class="ic16"><use href="#bubble"/></svg>
</footer>
</div>
</body>
</html>
```
FILE: styles.css
```css
* { box-sizing: border-box; }
body { margin: 0; width: 1364px; height: 729px; overflow: hidden; background: #efefef; color: #000;
  font: 11.5px/16px "Open Sans", "Noto Sans", sans-serif; letter-spacing: -.1px; }
i, em { font-style: normal; display: block; flex: none; }
b { font-weight: 400; }
svg { flex: none; display: block; }
.defs { position: absolute; }
.svg-t { font-family: "DejaVu Sans", sans-serif; letter-spacing: -.4px; }
.svg-b { font-weight: 700; }
.svg-s { font-family: "Liberation Serif", serif; font-weight: 700; font-style: italic; }
.svg-serif { font-family: "Liberation Serif", serif; font-weight: 700; }
.app { display: flex; flex-direction: column; width: 1364px; height: 729px; }
.ic16 { width: 16px; height: 16px; }
.ic24 { width: 24px; height: 24px; }

/* title and menu */
.titlebar { height: 23px; background: #fff; display: flex; align-items: center; padding-left: 2px; flex: none; }
.title { margin-left: 5px; flex: 1; font-size: 11.5px; letter-spacing: -.12px; }
.winbtns { width: 110px; height: 20px; margin-right: 14px; }
.menubar { height: 19px; display: grid; padding-left: 10px; align-items: center; white-space: nowrap; flex: none;
  grid-template-columns: 51px 34px 39px 42px 56px 53px 47px 46px 62px 38px 43px 71px 40px; }
.menubar u, .svct a { text-underline-offset: 2px; }

/* toolbars */
.toolbar { height: 39px; border-top: 1px solid #bdbdbd; background: linear-gradient(#fafafa, #ededed); display: flex; align-items: center; flex: none; }
.toolbar.third { border-bottom: 1px solid #b4b4b4; }
.tb { width: 33px; height: 32px; display: flex; align-items: center; justify-content: center; flex: none; }
.tb svg, .lb svg { width: 24px; height: 24px; }
.tb.off svg { opacity: .45; }
.tb.grey svg { filter: grayscale(1); }
.tb.framed { background: #fff; border: 1px solid #b0b0b0; border-radius: 2px; }
.tb.checked, .dt.checked { background: #d9d9d9; border: 1px solid #a9a9a9; border-radius: 2px; }
.undo-off { fill: #a08070; }
.redo-off { fill: #80998a; }
.grip { width: 16px; height: 18px; padding: 0 4px 0 7px; background: radial-gradient(circle, #b5b5b5 .6px, transparent .9px) 7px 0 / 3px 3px content-box; }
.grip.first { width: 12.5px; padding: 0 3px 0 4px; }
.grip.wide { width: 17px; }
.sep { width: 3px; height: 20px; margin-left: 4px; border-left: 1px solid #cacaca; }
.arr { width: 12px; height: 8px; background: #555; clip-path: polygon(2px 2px, 10px 2px, 6px 6px); }
.arr.off { opacity: .5; }
.arr.checked { clip-path: none; height: 32px; border: 1px solid #a9a9a9; border-radius: 2px; background: #d9d9d9; display: flex; align-items: center; justify-content: center; }
.arr.checked::after { content: ""; border: 4px solid transparent; border-top-color: #555; border-bottom: 0; }
.hgrip { width: 17px; height: 4px; background: radial-gradient(circle, #aaa .6px, transparent .9px) 0 0 / 3px 3px; }

/* main area */
.main { height: 541px; display: grid; grid-template-columns: 51px 318px 572px 423px; flex: none; }
.leftbar { background: linear-gradient(90deg, #fbfbfb, #ececec); padding-top: 5px; }
.leftbar .hgrip { margin: 0 0 3px 18px; height: 5px; }
.lb { height: 32.2px; display: flex; align-items: center; padding-left: 8px; }
.lb .arr { margin-left: 4px; }
.docks { border-left: 1px solid #b8b8b8; border-right: 1px solid #c4c4c4; display: flex; flex-direction: column; padding-right: 6px; }
.dock-title { display: flex; align-items: center; height: 21px; padding-left: 4px; flex: none; }
.dock-title span { flex: 1; }
.dock-title .d { width: 11px; height: 11px; margin-left: 3px; }
.dock-tools { display: flex; align-items: center; flex: none; }
.dt { width: 25px; height: 23px; display: flex; align-items: center; justify-content: center; flex: none; }
.dt svg { width: 16px; height: 16px; }
.docks > .dock-title { padding-right: 1px; }
.docks > .layers-title { height: 20px; }
.browser-tools { height: 30px; padding: 0 0 2px 3px; }
.layer-tools { height: 31px; padding: 0 0 3px 3px; }
.list { background: #fff; border: 1px solid #b0b0b0; display: flex; overflow: hidden; flex: none; }
.browser-list { height: 238px; }
.layer-list { height: 195px; }
.rows { flex: 1; min-width: 0; }
.layer-list .rows { margin-top: -4px; }
.row { height: 18px; display: flex; align-items: center; white-space: nowrap; }
.row > svg { width: 16px; height: 16px; margin-right: 5px; }
.browser-list .row span { margin-left: 1px; padding-top: 1px; }
.row.wide { letter-spacing: .15px; }
.row.child { padding-left: 16px; letter-spacing: -.2px; }
.tw { width: 19px; height: 10px; }
.tw.r, .tw.o { background: #555; clip-path: polygon(6px 1px, 10px 5px, 6px 9px); }
.tw.o { clip-path: polygon(4px 3px, 12px 3px, 8px 7px); }
.split { height: 6px; display: flex; justify-content: center; align-items: center; }
.sbar { width: 14px; border-left: 1px solid #b8b8b8; display: flex; flex-direction: column; flex: none; background: #fff; }
.sbar .up, .sbar .dn { height: 13px; display: flex; align-items: center; justify-content: center; background: linear-gradient(90deg, #fff, #f2f2f2); }
.sbar .up { border-bottom: 1px solid #b8b8b8; }
.sbar .dn { border-top: 1px solid #b8b8b8; }
.up::after, .dn::after { content: ""; border: 4px solid transparent; border-bottom-color: #555; border-top: 0; }
.dn::after { border: 4px solid transparent; border-top-color: #555; border-bottom: 0; }
.track { flex: 1; background: #e2e2e2; }
.thumb { background: linear-gradient(90deg, #fff, #f4f4f4); border-bottom: 1px solid #b8b8b8; }
.t-browser { height: 124px; }
.t-layers { height: 100px; margin-top: 67px; border-top: 1px solid #b8b8b8; border-bottom: 0; }

/* layer tree */
.cb { width: 14px; height: 14px; border: 1px solid #b5b5b5; background: #fff; }
.cb svg { width: 14px; height: 14px; margin: -1px; }
.row .cb { margin: 0 6px 0 4px; }
.row .sw { width: 16px; height: 16px; margin-right: 6px; border: 1px solid rgba(0,0,0,.45); }
.row .poly { margin-right: 6px; }
.poly { fill: #e0e0e0; stroke: #888; }
.row.tab { padding-left: 24px; font-weight: 700; letter-spacing: -.15px; }
.row.tab svg { width: 15px; margin-right: 6px; }
.row.dim span { font-weight: 700; font-style: italic; color: #7d7d7d; font-size: 12px; letter-spacing: -.08px; }
.row.bold span { font-weight: 700; letter-spacing: -.45px; }
.row em { margin-left: auto; margin-right: 4px; width: 17px; height: 17px; background: #f5f5f5; border: 1px solid #ddd; display: flex; align-items: center; justify-content: center; }
.row em svg { width: 15px; height: 15px; }
.row.sel { background: #0a78d6; color: #fff; }
.row.sel span { font-weight: 700; text-decoration: underline; letter-spacing: -.15px; }
.row.sel .tw { background: #002b55; }
.row.sel .poly { fill: #8db4de; stroke: #6b95c7; }
.row.cls { padding-left: 39px; letter-spacing: -.3px; }
.row.cls .sw { width: 18px; height: 18px; margin-right: 6px; border-color: rgba(0,0,0,.15); }
.purple { background: #9a7db8; }
.white { background: #fff; }
.tan { background: #beb297; }
.red { background: #c63c3a; }
.lime { background: #bfcf4d; }
.lilac { background: #c6b1ca; }
.yellow { background: #fff08f; }

/* canvas */
.canvas { background: #fff; border: 1px solid #b4b4b4; }
.map { width: 569px; height: 539px; }

/* styling dock */
.right { position: relative; display: flex; flex-direction: column; padding-left: 6px; overflow: hidden; }
.vgrip { position: absolute; left: 2px; top: 263px; width: 4px; height: 18px; background: radial-gradient(circle, #aaa .6px, transparent .9px) 0 0 / 3px 3px; }
.right .dock-title { height: 22px; }
.combo, .btn, .field, .spin { border: 1px solid #adadad; border-radius: 3px; background: linear-gradient(#fff, #f1f1f1); display: flex; align-items: center; white-space: nowrap; }
.layer-combo { margin: 1px 1px 6px 3px; height: 24px; padding: 0 4px 0 5px; }
.layer-combo span { flex: 1; margin-left: 2px; }
.combo svg { width: 16px; height: 16px; }
.styling { display: flex; height: 330px; padding-left: 3px; }
.modes { width: 38px; background: #5b5b5b; }
.m { display: flex; height: 32px; padding-left: 3px; align-items: center; }
.m.on { background: #efefef; padding-left: 6px; }
.m svg { width: 24px; height: 24px; }
.stycol { flex: 1; padding-left: 3px; display: flex; flex-direction: column; min-width: 0; letter-spacing: -.35px; }
.scrollarea { height: 301px; display: flex; width: 371px; overflow: hidden; }
.content { width: 357px; overflow: hidden; }
.tabs { height: 11px; display: flex; border-bottom: 1px solid #b8b8b8; overflow: hidden; letter-spacing: -.1px; }
.tabx { height: 10px; line-height: 1px; width: 71px; border-right: 1px solid #b8b8b8; background: #e4e4e4; text-align: center; }
.tabx.on { background: #fff; width: 61px; border-left: 1px solid #b8b8b8; height: 11px; }
.classes { height: 162px; margin-top: 10px; border: 1px solid #b0b0b0; background: #fff; }
.thead, .trow { display: grid; grid-template-columns: 66px 95px 1fr; height: 18px; align-items: center; white-space: nowrap; letter-spacing: -.15px; }
.thead { background: linear-gradient(#fff, #f0f0f0); border-bottom: 1px solid #b8b8b8; height: 19px; }
.thead span { padding-left: 2px; border-right: 1px solid #ccc; height: 18px; line-height: 20px; display: flex; }
.thead span:last-child { border: 0; }
.thead .arr { margin: 4px 0 0 auto; }
.trow { letter-spacing: -.36px; line-height: 14px; }
.trow span { padding-left: 3px; display: flex; }
.trow .cb { margin: 2px 6px 0 0; }
.trow .sw { width: 16px; height: 16px; margin-top: 1px; border: 1px solid rgba(0,0,0,.3); }
.moderow { display: flex; height: 24px; margin-top: 6px; align-items: center; }
.moderow .lbl { width: 32px; margin-left: -1px; letter-spacing: -.1px; }
.mode { width: 158px; height: 24px; padding: 0 4px; margin-left: 1px; letter-spacing: -.45px; }
.mode span { flex: 1; margin-left: 3px; }
.push { margin-left: auto; margin-right: 6px; }
.spin { background: #fff; height: 21px; padding-left: 5px; }
.spin span { flex: 1; }
.spin .ud { width: 14px; height: 100%; border-left: 1px solid #b8b8b8; display: flex; flex-direction: column; align-items: center; justify-content: center; gap: 3px; }
.ud::before, .ud::after { content: ""; border: 4px solid transparent; border-bottom-color: #555; border-top: 0; }
.ud::after { border: 4px solid transparent; border-top-color: #555; border-bottom: 0; }
.classes-n { width: 71px; }
.btnrow { display: flex; margin-top: 6px; align-items: center; height: 24px; }
.btn { justify-content: center; height: 22px; }
.w80 { width: 80px; }
.btn.sq { width: 28px; height: 24px; margin-left: 6px; }
.btn.sq + .w80 { margin-left: 6px; }
.btn.sq svg { width: 15px; height: 15px; }
.adv.w80 { margin-left: auto; gap: 6px; padding-left: 6px; letter-spacing: -.6px; }
.adv .arr { transform: scale(.85); }
.chk { display: flex; align-items: center; letter-spacing: -.6px; }
.chk .cb { margin-right: 4px; }
.link { margin-top: 8px; height: 16px; }
.rend { display: flex; align-items: center; margin-top: 16px; font-weight: 700; font-size: 12px; letter-spacing: -.42px; }
.tri { width: 8px; height: 11px; margin: 1px 9px 0 4px; background: #333; clip-path: polygon(0 0, 100% 50%, 0 100%); }
.scrollarea .sbar { background: #fff; border-left-color: #ccc; }
.t-style { height: 96px; background: #e2e2e2; }
.scrollarea .track { background: #fafafa; }
.applyrow { display: flex; align-items: center; margin-top: 6px; height: 23px; width: 372px; }
.ur { width: 24px; height: 23px; margin-right: 6px; }
.ur svg { width: 16px; height: 16px; }
.undo { fill: #e07b3f; }
.redo { fill: #6fae7f; }
.live { margin-left: auto; margin-right: 12px; letter-spacing: -.5px; }
.rsplit { height: 9px; padding: 4px 0 0 202px; flex: none; }
.rsplit .hgrip { height: 3px; }
.right .qms-title { height: 20px; margin-top: -1px; }
.field { background: #fff; height: 22px; padding: 0 6px; }
.qsearch { width: 420px; color: #aaa; font-style: italic; padding-left: 2px; flex: none; }
.qfilter { display: flex; justify-content: flex-end; margin: 6px -3px 0 0; gap: 6px; height: 22px; flex: none; }
.btn.ext { width: 82px; height: 21px; letter-spacing: -.3px; }
.combo.all { width: 73px; height: 22px; padding: 0 6px 0 4px; }
.combo.all span { flex: 1; }
.qlist { margin-top: 6px; height: 70px; width: 420px; border: 1px solid #b0b0b0; display: flex; background: #fff; flex: none; }
.qrows { flex: 1; }
.last { height: 15px; line-height: 16px; padding-left: 3px; letter-spacing: -.3px; }
.svc { height: 53px; background: #e7e6e2; display: flex; align-items: center; padding: 1px 5px 0 4px; }
.svct { margin-left: 7px; flex: 1; display: flex; flex-direction: column; gap: 2px; letter-spacing: -.6px; }
.svct strong { font-size: 12px; letter-spacing: -.4px; }
.svct a { color: #00e; text-decoration: underline; }
.dot { width: 11px; height: 11px; border-radius: 50%; background: #008000; margin-right: 8px; margin-top: 2px; }
.add { width: 33px; height: 20px; letter-spacing: -.4px; }
.qlist .sbar { width: 15px; }
.t-qms { height: 27px; }

/* status bar */
.status { height: 29px; border-bottom: 1px solid #222; display: flex; align-items: center; padding-left: 4px; white-space: nowrap; flex: none; letter-spacing: -.45px; }
.status > * { flex: none; }
.locate { width: 200px; color: #777; padding: 0 7px; letter-spacing: -.25px; }
.locate svg { width: 14px; height: 14px; margin-right: 6px; }
.coord-label { width: 57px; margin-left: 363px; }
.coord { width: 96px; padding-left: 9px; letter-spacing: -.25px; }
.mid { margin: 0 12px 0 5px; }
.scale-label { width: 30px; }
.scale { width: 80px; padding: 0 0 0 3px; letter-spacing: -.25px; }
.scale span { flex: 1; }
.scale .arr { width: 20px; clip-path: polygon(6px 2px, 14px 2px, 10px 6px); }
.lock { width: 12px; height: 15px; margin: 0 8px 0 12px; }
.mag-label { width: 48px; }
.status .spin { width: 88px; height: 20px; padding-left: 4px; letter-spacing: -.2px; }
.rot-label { margin-left: 8px; width: 51px; letter-spacing: -.25px; }
.status .rotn { width: 84px; margin-right: 6px; }
.render { margin-left: 4px; width: 53px; }
.epsg { width: 73px; margin-left: 3px; }
```
